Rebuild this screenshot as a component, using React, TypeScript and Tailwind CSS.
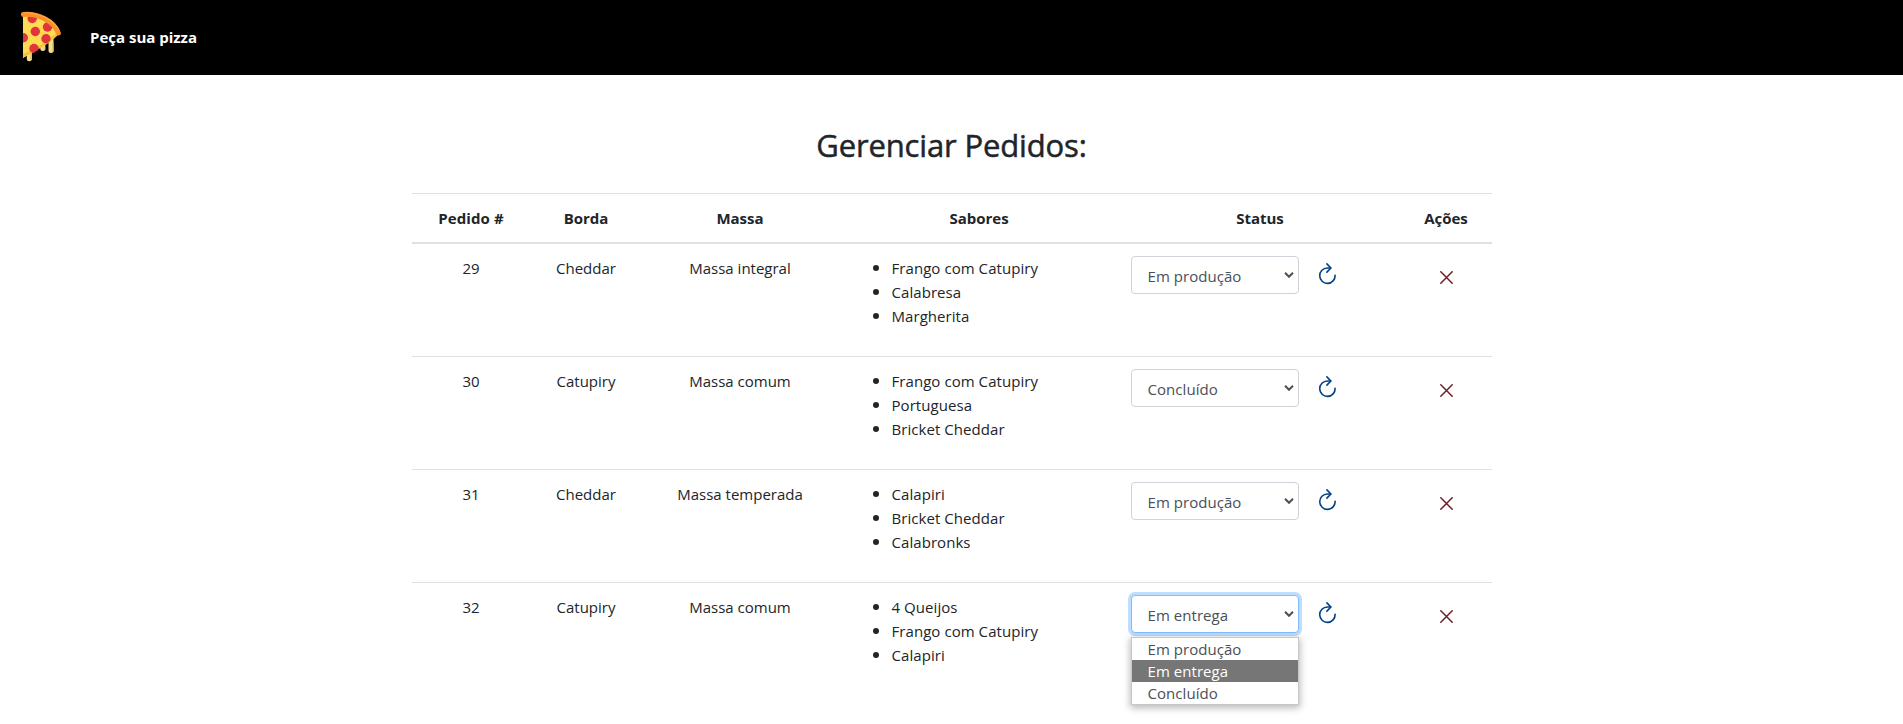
import React from "react";

type Order = {
  id: number;
  crust: string;
  dough: string;
  flavors: string[];
  status: string;
  open?: boolean;
};

const orders: Order[] = [
  { id: 29, crust: "Cheddar", dough: "Massa integral", flavors: ["Frango com Catupiry", "Calabresa", "Margherita"], status: "Em produção" },
  { id: 30, crust: "Catupiry", dough: "Massa comum", flavors: ["Frango com Catupiry", "Portuguesa", "Bricket Cheddar"], status: "Concluído" },
  { id: 31, crust: "Cheddar", dough: "Massa temperada", flavors: ["Calapiri", "Bricket Cheddar", "Calabronks"], status: "Em produção" },
  { id: 32, crust: "Catupiry", dough: "Massa comum", flavors: ["4 Queijos", "Frango com Catupiry", "Calapiri"], status: "Em entrega", open: true },
];

const statuses = ["Em produção", "Em entrega", "Concluído"];

const columns = "grid grid-cols-[119px_111px_197px_281px_281px_91px]";

function PizzaLogo() {
  return (
    <svg viewBox="0 0 42 52" className="h-[52px] w-[42px]" aria-hidden="true">
      <defs>
        <clipPath id="slice">
          <path d="M3 4 C19 4 32 12 38 23 C29 32 15 42 3 48 Z" />
        </clipPath>
      </defs>
      <g stroke="#f5df8e" strokeWidth="5" strokeLinecap="round">
        <path d="M9.3 36 V47.7" />
        <path d="M22.8 30 V37.5" />
        <path d="M31 26 V39.5" />
      </g>
      <g stroke="#dfc678" strokeWidth="1.6">
        <path d="M11 42 V49" />
        <path d="M24.5 36 V39" />
        <path d="M32.7 32 V41" />
      </g>
      <path d="M3 4 C19 4 32 12 38 23 C29 32 15 40 3 47 Z" fill="#ffdc54" />
      <path d="M38 20 C29 30 15 38 3 43 V47 C15 40 29 33 38 24 Z" fill="#f8c330" />
      <g clipPath="url(#slice)" fill="#e0353b">
        <circle cx="12.2" cy="7.500" r="4.7" />
        <circle cx="27.5" cy="16" r="4.7" />
        <circle cx="15.3" cy="20.5" r="4.7" />
        <circle cx="3.3" cy="26.8" r="4.7" />
        <circle cx="26" cy="27.8" r="4.7" />
        <circle cx="14" cy="37.5" r="4.7" />
      </g>
      <path d="M3.500 3.500 C18 2.300 34 10 38.300 22" fill="none" stroke="#fb902c" strokeWidth="5" strokeLinecap="round" />
      <path d="M4 1.900 C19 1.300 34 9 39.300 20" fill="none" stroke="#ffa53a" strokeWidth="1.3" />
    </svg>
  );
}

function RefreshIcon() {
  return (
    <svg viewBox="0 0 28 28" fill="none" stroke="#004085" strokeWidth="1.6" strokeLinecap="round" strokeLinejoin="round" className="h-7 w-7" aria-hidden="true">
      <path d="M21.100 15.300a7.700 7.700 0 1 1-7.700-7.300h3.300" />
      <path d="M12.900 3.900l4 4.100-4 4.100" />
    </svg>
  );
}

function RemoveIcon() {
  return (
    <svg viewBox="0 0 13 13" className="h-[13px] w-[13px]" stroke="#721c24" strokeWidth="1.5" strokeLinecap="round" aria-hidden="true">
      <path d="M.8.8l11.400 11.400M12.200.8L.8 12.200" />
    </svg>
  );
}

function StatusSelect({ value, open }: { value: string; open?: boolean }) {
  return (
    <div className="relative w-[168px]">
      <button
        className={
          open
            ? "flex h-[38px] w-full items-center justify-between rounded-[4px] border border-[#80bdff] bg-white pl-4 pr-1 shadow-[0_0_0_3px_rgba(0,123,255,0.25)]"
            : "flex h-[38px] w-full items-center justify-between rounded-[4px] border border-[#ced4da] bg-white pl-4 pr-1"
        }
      >
        <span className="pt-[1px] tracking-[0.05px] text-[#495057]">{value}</span>
        <svg viewBox="0 0 10 6" className="h-[6px] w-[10px]" fill="none" stroke="#495057" strokeWidth="2" aria-hidden="true">
          <path d="M1 .8l4 4 4-4" />
        </svg>
      </button>
      {open && (
        <ul className="absolute left-0 top-[42px] z-10 w-full border border-[#c8c8c8] bg-white text-left text-[#495057] shadow-[0_2px_7px_1px_rgba(0,0,0,0.28)]">
          {statuses.map((s) => (
            <li
              key={s}
              className={
                s === value
                  ? "h-[22px] bg-[#767676] pl-4 leading-[22px] tracking-[0.05px] text-white"
                  : "h-[22px] pl-4 leading-[22px] tracking-[0.05px]"
              }
            >
              {s}
            </li>
          ))}
        </ul>
      )}
    </div>
  );
}

export default function App() {
  return (
    <div className="h-[724px] overflow-hidden bg-white font-['Open_Sans','Noto_Sans',sans-serif] text-[15px] leading-6 text-[#212529]">
      <header className="flex h-[75px] items-center bg-black pb-px pl-5">
        <PizzaLogo />
        <a className="ml-7 pb-px font-bold text-white">Peça sua pizza</a>
      </header>
      <main className="mx-auto w-[1080px]">
        <h2 className="pt-[51px] text-center text-[31px] font-medium leading-[38px] tracking-[-0.15px] [-webkit-text-stroke:0.5px_#212529]">Gerenciar Pedidos:</h2>
        <section className="mt-[29px]">
          <div className={`${columns} border-t border-b-2 border-[#dee2e6] py-3 text-center font-bold`}>
            <span className="tracking-[0.1px]">Pedido #</span>
            <span>Borda</span>
            <span>Massa</span>
            <span>Sabores</span>
            <span>Status</span>
            <span>Ações</span>
          </div>
          {orders.map((o) => (
            <div key={o.id} className={`${columns} border-t border-[#dee2e6] pb-7 pt-3 text-center nth-2:border-t-0`}>
              <span>{o.id}</span>
              <span>{o.crust}</span>
              <span>{o.dough}</span>
              <ul className="list-disc pl-[53px] text-left leading-[22px] tracking-[0.06px] marker:text-[18px]">
                {o.flavors.map((f) => (
                  <li key={f} className="h-6">{f}</li>
                ))}
              </ul>
              <div className="flex h-[38px] items-start gap-[15px] pl-[11px]">
                <StatusSelect value={o.status} open={o.open} />
                <button className="pt-1">
                  <RefreshIcon />
                </button>
              </div>
              <div className="flex justify-center pl-px pt-[15px]">
                <button className="h-[13px]">
                  <RemoveIcon />
                </button>
              </div>
            </div>
          ))}
        </section>
      </main>
    </div>
  );
}
